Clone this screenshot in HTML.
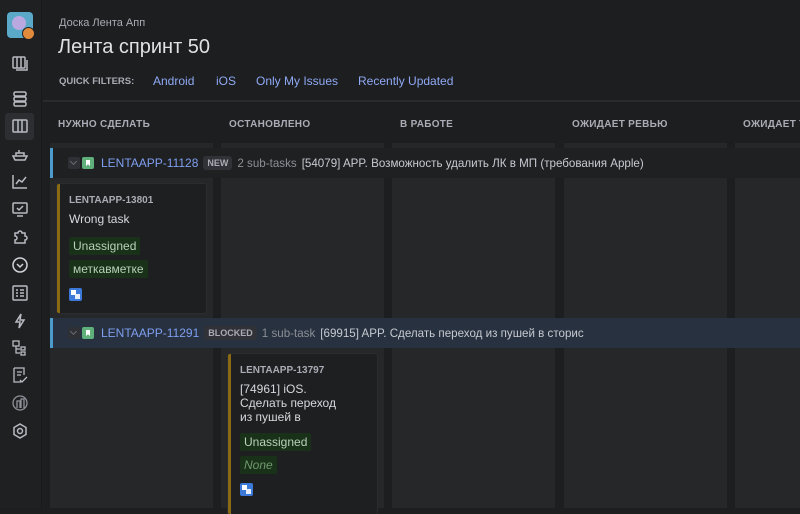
<!DOCTYPE html>
<html><head><meta charset="utf-8"><style>
*{margin:0;padding:0;box-sizing:border-box}
body{width:800px;height:508px;overflow:hidden;background:#1d1e20;font-family:"Liberation Sans","Noto Sans CJK JP",sans-serif;color:#c7cad1;position:relative}
.abs{position:absolute}
.side{left:0;top:0;width:42px;height:508px;background:#1f2022;border-right:1px solid #18191b}
.ic{position:absolute;left:11px;width:18px;height:18px}
.col{position:absolute;top:143px;width:163px;height:365px;background:#262729}
.colh{position:absolute;top:119px;font-size:10px;font-weight:bold;color:#a9acb4;letter-spacing:.3px;white-space:nowrap}
.lane{position:absolute;left:50px;right:0;height:30px;background:#1f2022;font-size:11.6px;display:flex;align-items:center;white-space:nowrap;overflow:hidden}
.lane .bar{position:absolute;left:0;top:0;width:3px;height:30px;background:#4b9ccc}
.chev{width:12px;height:12px;background:#2e3035;border-radius:2px;margin-left:18px;margin-right:2px;position:relative}
.chev:after{content:"";position:absolute;left:3px;top:2px;width:4px;height:4px;border-right:1px solid #6a6d74;border-bottom:1px solid #6a6d74;transform:rotate(45deg)}
.story{width:12px;height:12px;background:#5fb07a;border-radius:2px;margin-right:7px;position:relative}
.story:after{content:"";position:absolute;left:4px;top:3px;width:4px;height:6px;background:#fff;clip-path:polygon(0 0,100% 0,100% 100%,50% 70%,0 100%)}
.key{color:#7f9ff0;font-size:12px;margin-right:5px}
.badge{background:#303237;color:#a9acb4;font-size:9px;font-weight:bold;padding:2px 4px;border-radius:3px;margin-right:5px}
.sub{color:#8c8f96;margin-right:5px}
.card{position:absolute;width:149px;background:#1e1f21;border-left:3px solid #8a6a12;border-radius:2px;box-shadow:0 0 0 1px #2b2c30}
.ck{font-size:10px;font-weight:bold;color:#a9acb4;position:absolute;left:9px}
.ct{font-size:12px;color:#d6d8dd;position:absolute;left:9px;line-height:14px}
.tag{position:absolute;left:9px;background:#1a3119;color:#b8d0b8;font-size:12px;padding:2px 4px;border-radius:2px}
.sq{position:absolute;left:9px;width:13px;height:13px;background:#3d79d8;border-radius:2px}
.sq:before{content:"";position:absolute;left:2px;top:2px;width:5px;height:5px;background:#fff}
.sq:after{content:"";position:absolute;left:6px;top:6px;width:5px;height:5px;background:#e6eefc}
</style></head><body>
<div class="abs side">
 <div class="abs" style="left:7px;top:12px;width:26px;height:26px;background:#5aa9c9;border-radius:4px"></div>
 <div class="abs" style="left:12px;top:16px;width:14px;height:14px;background:#b9a9e0;border-radius:50%"></div>
 <div class="abs" style="left:22px;top:27px;width:13px;height:13px;background:#e08a3c;border-radius:50%;border:1px solid #1f2022"></div>
 <svg class="ic" style="top:54px" viewBox="0 0 18 18" fill="none" stroke="#b8bbc2" stroke-width="1.5"><rect x="2" y="3" width="12" height="11" rx="1"/><path d="M6 3v11M10 3v11M16 6v10H5"/></svg>
 <svg class="ic" style="top:90px" viewBox="0 0 18 18" fill="none" stroke="#b8bbc2" stroke-width="1.5"><rect x="3" y="2" width="12" height="4" rx="1.5"/><rect x="3" y="7" width="12" height="4" rx="1.5"/><rect x="3" y="12" width="12" height="4" rx="1.5"/></svg>
 <div class="abs" style="left:5px;top:113px;width:29px;height:27px;background:#2c2e32;border-radius:3px"></div>
 <svg class="ic" style="top:117px" viewBox="0 0 18 18" fill="none" stroke="#b8bbc2" stroke-width="1.5"><rect x="2" y="3" width="14" height="12" rx="1"/><path d="M7 3v12M11 3v12"/></svg>
 <svg class="ic" style="top:145px" viewBox="0 0 18 18" fill="none" stroke="#b8bbc2" stroke-width="1.5"><path d="M2 11h14l-2 4H4zM5 11V8h8v3M8 8V5"/></svg>
 <svg class="ic" style="top:172px" viewBox="0 0 18 18" fill="none" stroke="#b8bbc2" stroke-width="1.5"><path d="M2 3v13h14M5 12l3-4 3 2 4-5"/></svg>
 <svg class="ic" style="top:200px" viewBox="0 0 18 18" fill="none" stroke="#b8bbc2" stroke-width="1.5"><rect x="2" y="3" width="14" height="10" rx="1"/><path d="M6 16h6M6 8l2 2 4-4"/></svg>
 <svg class="ic" style="top:228px" viewBox="0 0 18 18" fill="none" stroke="#b8bbc2" stroke-width="1.5"><path d="M4 5h3a2 2 0 014 0h3v3a2 2 0 010 4v3H4v-3a2 2 0 000-4z"/></svg>
 <svg class="ic" style="top:256px" viewBox="0 0 18 18" fill="none" stroke="#d0d3d9" stroke-width="1.5"><circle cx="9" cy="9" r="7"/><path d="M6 8l3 3 3-3"/></svg>
 <svg class="ic" style="top:284px" viewBox="0 0 18 18" fill="none" stroke="#b8bbc2" stroke-width="1.5"><rect x="2" y="2" width="14" height="14" rx="1"/><path d="M5 6h2M9 6h4M5 9h2M9 9h4M5 12h2M9 12h4"/></svg>
 <svg class="ic" style="top:312px" viewBox="0 0 18 18" fill="none" stroke="#b8bbc2" stroke-width="1.5"><path d="M10 2L5 10h4l-1 6 5-8H9z"/></svg>
 <svg class="ic" style="top:339px" viewBox="0 0 18 18" fill="none" stroke="#b8bbc2" stroke-width="1.3"><rect x="2" y="2" width="6" height="5"/><path d="M5 7v7h4M5 10h4"/><rect x="10" y="8" width="4" height="3"/><rect x="10" y="13" width="4" height="3"/></svg>
 <svg class="ic" style="top:366px" viewBox="0 0 18 18" fill="none" stroke="#b8bbc2" stroke-width="1.3"><path d="M3 2h10v7M3 2v14h7M6 6h5M6 9h4M9 14l2 2 5-5"/></svg>
 <svg class="ic" style="top:394px" viewBox="0 0 18 18" fill="none" stroke="#8f9299" stroke-width="1.3"><circle cx="9" cy="9" r="7"/><path d="M6 14V7h3v7M10 14V5h3v9"/></svg>
 <svg class="ic" style="top:422px" viewBox="0 0 18 18" fill="none" stroke="#b8bbc2" stroke-width="1.5"><path d="M9 2l6 3.5v7L9 16l-6-3.5v-7z"/><circle cx="9" cy="9" r="2.5"/></svg>
</div>
<div class="abs" style="left:59px;top:17px;font-size:11px;color:#a9acb4">Доска Лента Апп</div>
<div class="abs" style="left:58px;top:36px;font-size:20px;color:#dfe1e5">Лента спринт 50</div>
<div class="abs" style="left:59px;top:76px;font-size:9.5px;font-weight:bold;color:#a9acb4">QUICK FILTERS:</div>
<div class="abs" style="left:153px;top:74px;font-size:12px;color:#8fa9f5">Android</div>
<div class="abs" style="left:216px;top:74px;font-size:12px;color:#8fa9f5">iOS</div>
<div class="abs" style="left:256px;top:74px;font-size:12px;color:#8fa9f5">Only My Issues</div>
<div class="abs" style="left:358px;top:74px;font-size:12px;color:#8fa9f5">Recently Updated</div>
<div class="abs" style="left:43px;top:100px;width:757px;height:2px;background:#2a2b2f"></div>
<div class="col" style="left:50px"></div><div class="col" style="left:221px"></div><div class="col" style="left:392px"></div><div class="col" style="left:564px"></div><div class="col" style="left:735px"></div>
<div class="colh" style="left:58px">НУЖНО СДЕЛАТЬ</div>
<div class="colh" style="left:229px">ОСТАНОВЛЕНО</div>
<div class="colh" style="left:400px">В РАБОТЕ</div>
<div class="colh" style="left:572px">ОЖИДАЕТ РЕВЬЮ</div>
<div class="colh" style="left:743px">ОЖИДАЕТ Т</div>
<div class="lane" style="top:148px"><div class="bar"></div><div class="chev"></div><div class="story"></div><span class="key">LENTAAPP-11128</span><span class="badge">NEW</span><span class="sub">2 sub-tasks</span><span style="color:#c7cad1">[54079] APP. Возможность удалить ЛК в МП (требования Apple)</span></div>
<div class="card" style="left:57px;top:184px;height:129px">
 <div class="ck" style="top:11px">LENTAAPP-13801</div>
 <div class="ct" style="top:28px">Wrong task</div>
 <div class="tag" style="top:53px">Unassigned</div>
 <div class="tag" style="top:76px">меткавметке</div>
 <div class="sq" style="top:104px"></div>
</div>
<div class="lane" style="top:318px;background:#27313f"><div class="bar"></div><div class="chev"></div><div class="story"></div><span class="key">LENTAAPP-11291</span><span class="badge">BLOCKED</span><span class="sub">1 sub-task</span><span style="color:#c7cad1">[69915] APP. Сделать переход из пушей в сторис</span></div>
<div class="card" style="left:228px;top:354px;height:160px">
 <div class="ck" style="top:11px">LENTAAPP-13797</div>
 <div class="ct" style="top:28px">[74961] iOS.<br>Сделать переход<br>из пушей в</div>
 <div class="tag" style="top:79px">Unassigned</div>
 <div class="tag" style="top:102px;color:#6f9a6f;font-style:italic">None</div>
 <div class="sq" style="top:129px"></div>
</div>
</body></html>
